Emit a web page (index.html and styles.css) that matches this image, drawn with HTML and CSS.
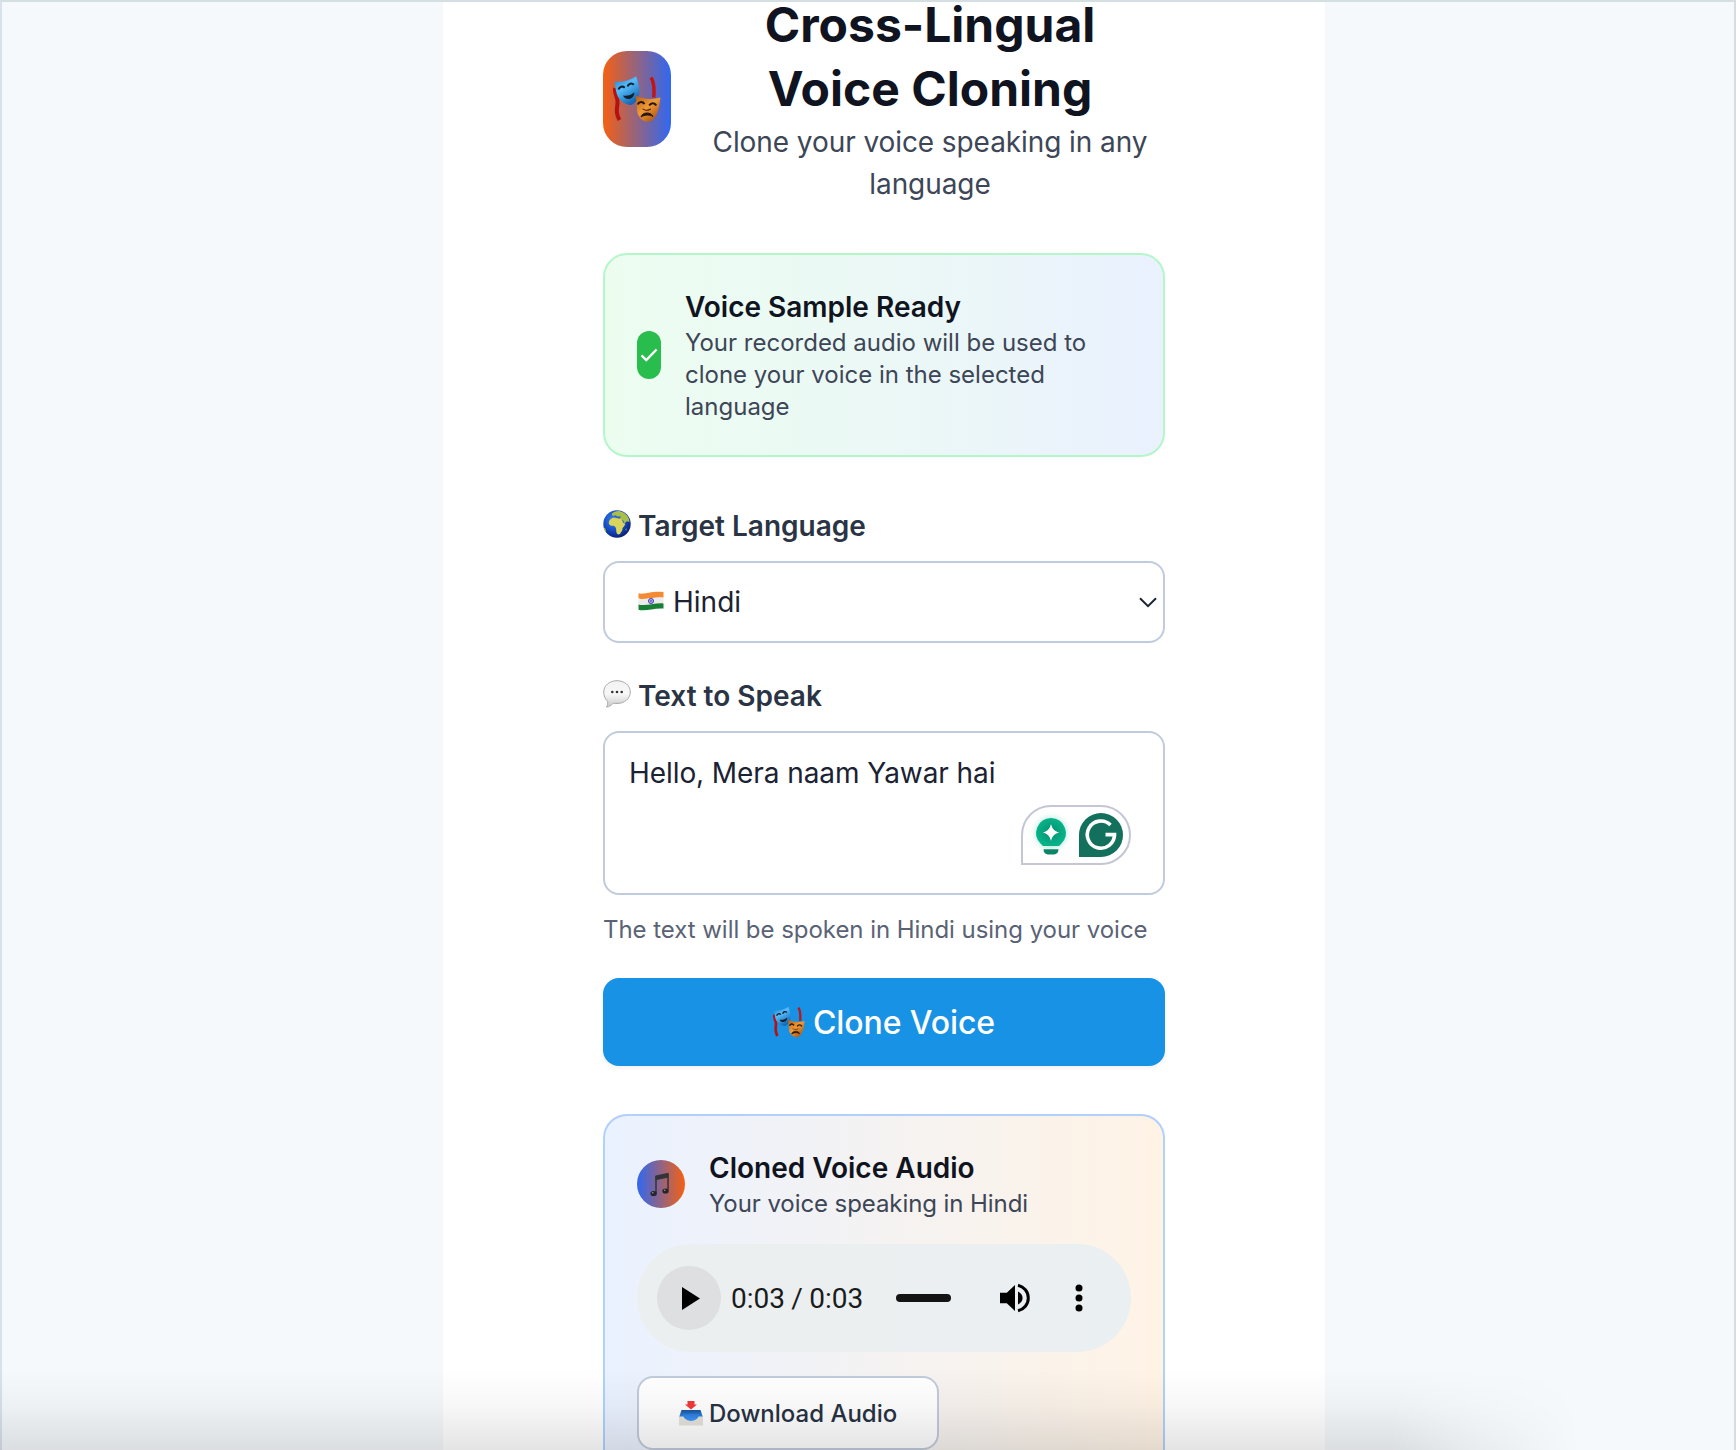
FILE: index.html
```html
<!DOCTYPE html>
<html lang="en">
<head>
<meta charset="utf-8">
<title>Cross-Lingual Voice Cloning</title>
<link rel="stylesheet" href="styles.css">
</head>
<body>
<svg class="defs" aria-hidden="true">
  <defs>
    <linearGradient id="maskBlue" x1="0" y1="0" x2=".6" y2="1"><stop offset="0" stop-color="#1f78c4"/><stop offset=".45" stop-color="#55bdfb"/><stop offset="1" stop-color="#1467b4"/></linearGradient>
    <linearGradient id="maskGold" x1="0" y1="0" x2=".8" y2="1"><stop offset="0" stop-color="#b85c0c"/><stop offset=".5" stop-color="#f09a38"/><stop offset="1" stop-color="#a9500b"/></linearGradient>
    <radialGradient id="sea" cx=".4" cy=".35" r=".65"><stop offset="0" stop-color="#3f86ee"/><stop offset=".6" stop-color="#164cc4"/><stop offset="1" stop-color="#0b237c"/></radialGradient>
    <linearGradient id="bubble" x1="0" y1="0" x2="0" y2="1"><stop offset="0" stop-color="#f2f2f2"/><stop offset=".5" stop-color="#f8f8f8"/><stop offset="1" stop-color="#c8c8c8"/></linearGradient>
    <linearGradient id="tray" x1="0" y1="0" x2="0" y2="1"><stop offset="0" stop-color="#17559f"/><stop offset="1" stop-color="#3b93f5"/></linearGradient>
    <linearGradient id="paper" x1="0" y1="0" x2="0" y2="1"><stop offset="0" stop-color="#2f7fe0"/><stop offset="1" stop-color="#3f97fb"/></linearGradient>
    <radialGradient id="bulb"><stop offset="0" stop-color="#0a8f70"/><stop offset="1" stop-color="#06b48a"/></radialGradient>
    <symbol id="masks" viewBox="0 0 48 48">
      <path d="M2 13C1 18 5 22 4.500 28S2.500 38 6.500 45" fill="none" stroke="#b5120f" stroke-width="4"/>
      <path d="M38 2.500c3 4 3.500 10 2.800 20" fill="none" stroke="#c01512" stroke-width="3.500"/>
      <path d="M1.500 6.500C9 7.500 17 5.500 23 1.200c2 5.300 4 11.300 3.200 17.300-.6 5-3.700 10-8.200 11.500C11.500 29.500 6 25.500 4 19.500 2.600 15 2.200 11 1.500 6.500Z" fill="url(#maskBlue)"/>
      <path d="M5.500 14.500c1-3 4-3.800 6.300-1.700M14.500 11.500c1-3 4.200-4 6.300-1.800" fill="none" stroke="#10202e" stroke-width="2.100"/>
      <path d="M10 20.500c4 .7 8.500-.4 11.300-3.300.2 3.500-2 6.500-5.300 6.800-2.800.2-5-1.200-6-3.500Z" fill="#10202e"/>
      <path d="M22.500 20.500c7 3.500 16 4.500 25 2-1 6.500-1.500 12.500-4.500 18-2 4-4.700 6.500-8.200 6.300-4.300-.2-8.300-3.300-10-7.800-1.500-4-.5-11-2.300-18.500Z" fill="url(#maskGold)"/>
      <path d="M24.800 29.500c1-3 4.700-3.500 6.700-.5M36.200 30.500c2-3 5.600-2.800 7 0" fill="none" stroke="#23170d" stroke-width="2.100"/>
      <path d="M29.500 34c2 .3 3 1.800 5 1.200 1.500-.2 2.300-1 3.500-1" fill="none" stroke="#5c2c08" stroke-width="1.200"/>
      <path d="M28 42c1.500-5 9.500-5.500 12-.5-3-2-8-2-12 .5Z" fill="#23170d" stroke="#23170d"/>
    </symbol>
  </defs>
</svg>

<main class="panel">
  <header class="hero">
    <div class="hero-icon"><svg width="48" height="48"><use href="#masks"/></svg></div>
    <div class="hero-text">
      <h1>Cross-Lingual Voice Cloning</h1>
      <p>Clone your voice speaking in any language</p>
    </div>
  </header>

  <section class="sample">
    <div class="sample-check">
      <svg width="18" height="14" viewBox="0 0 18 14"><path d="M1.500 7.300l4.800 4.800L16.600 1.500" fill="none" stroke="#fff" stroke-width="2.400"/></svg>
    </div>
    <div class="copy">
      <h2>Voice Sample Ready</h2>
      <p>Your recorded audio will be used to clone your voice in the selected language</p>
    </div>
  </section>

  <div class="field">
    <div class="label">
      <svg width="28" height="28" viewBox="0 0 28 28"><circle cx="14" cy="14" r="13.700" fill="url(#sea)"/><path d="M9 3.500c2-1.800 5-2.700 8-2.300 4 .8 7.500 3.800 9 7.800l.5 3-2.500-.7-2.500 2-1.500-3-2.500-1.300-1.500-2-3 .3-2.500-1-1.500-1.300Z" fill="#a9bf4c"/><path d="M10 6l2.500-.8 2 1.300 3-.3.5 1.300-3.500.5-2.500-.3Z" fill="#2f66c0"/><path d="M7 9.800C8 8.200 10 7.600 12.500 7.800c2 .8 4 .7 6 1.200l2 4 1.800.8c-.3 2-2 3-2.800 4.500.2 2.500-1.300 3.800-2.500 5.700-1.700 1-3 .4-3.500-1.500-.6-2 .1-3.500-1-5.200-.5-1.300-1.700-1.800-3.300-1.600C7 15.900 6 14.500 5.800 12.800c0-1.200.5-2.200 1.200-3Z" fill="#d8d45c"/><path d="M.6 17.500c1.500 0 2.600 1.500 2.200 4.500C1.500 20.700.9 19.300.6 17.500Z" fill="#a8be48"/><path d="M22.500 19.500l1-1.500-.3 3Z" fill="#c5c653"/></svg>
      <span>Target Language</span>
    </div>
    <div class="select">
      <svg class="flag" width="26" height="20" viewBox="0 0 26 20"><path d="M.5 2.300C6 4 13-.2 25.500 1v5.800C16 5.500 8 9.500.5 7.500Z" fill="#f58a34"/><path d="M.5 7.500C8 9.500 16 5.500 25.500 6.800v5.600C16 11.500 8 15.500.5 13.500Z" fill="#ececec"/><path d="M.5 13.500C8 15.500 16 11.500 25.500 12.400V17.500C16 16.700 8 20.500.5 18.700Z" fill="#178035"/><circle cx="13" cy="10" r="2.500" fill="#b9b9ec" stroke="#3a3aad" stroke-width="1"/><circle cx="13" cy="10" r=".8" fill="#22229a"/></svg>
      <span>Hindi</span>
      <svg class="chevron" width="18" height="11" viewBox="0 0 18 11"><path d="M1 1.200l8 8 8-8" fill="none" stroke="#1c2433" stroke-width="2"/></svg>
    </div>
  </div>

  <div class="field">
    <div class="label">
      <svg width="28" height="28" viewBox="0 0 28 28"><path d="M14 .7c7.500 0 13.300 4.800 13.300 11.300S21.500 23.500 14 23.500c-1.300 0-2.500-.1-3.700-.4-1.500 2-4 3.600-6.800 4 1-1.500 1.500-3.600 1.100-5.800C2.200 19.200.7 15.700.7 12 .7 5.500 6.500.7 14 .7Z" fill="url(#bubble)" stroke="#a9a9a9"/><g fill="#333"><circle cx="9.300" cy="12" r="1.300"/><circle cx="14" cy="12" r="1.300"/><circle cx="18.700" cy="12" r="1.300"/></g></svg>
      <span>Text to Speak</span>
    </div>
    <div class="textarea">
      Hello, Mera naam Yawar hai
      <div class="assistant">
        <svg width="36" height="44" viewBox="0 0 36 44"><circle class="glow" cx="17" cy="20" r="15" fill="#06b48a"/><path d="M17 5a15 15 0 0 1 10.500 25.500l-2.500 2.500H9l-2.500-2.500A15 15 0 0 1 17 5Z" fill="url(#bulb)"/><path d="M17 11c1.300 5 3.200 7 8.200 8.500-5 1.500-6.900 3.500-8.200 8.500-1.300-5-3.200-7-8.200-8.500 5-1.500 6.900-3.500 8.200-8.500Z" fill="#fff"/><path d="M9.500 36.200h15c0 3.300-1.700 5.200-4.500 5.200h-6c-2.800 0-4.500-1.900-4.500-5.200Z" fill="#0b8468"/></svg>
        <svg width="44" height="44" viewBox="0 0 44 44"><path d="M22 0a22 22 0 0 1 0 44H0V22A22 22 0 0 1 22 0Z" fill="#12705c"/><path d="M31.500 12A13.600 13.600 0 1 0 35.500 21.600H26.500M35.500 21.600V23" fill="none" stroke="#fff" stroke-width="3.600"/></svg>
      </div>
    </div>
    <p class="hint">The text will be spoken in Hindi using your voice</p>
  </div>

  <button class="clone" type="button"><svg width="32" height="32"><use href="#masks"/></svg><span>Clone Voice</span></button>

  <section class="result">
    <div class="result-head">
      <div class="result-icon">
        <svg width="20" height="25" viewBox="0 0 20 25"><path d="M5.500 3.500L18.500.8v4.700L5.500 8.200Z" fill="#33333a"/><path d="M6 4v17M18 2v16.500" stroke="#33333a" stroke-width="1.500"/><ellipse cx="3.600" cy="21.500" rx="3.200" ry="2.600" fill="#25252b"/><ellipse cx="15.500" cy="19" rx="3.200" ry="2.600" fill="#25252b"/><circle cx="2.800" cy="20.800" r=".8" fill="#999"/><circle cx="14.700" cy="18.300" r=".8" fill="#999"/></svg>
      </div>
      <div class="copy">
        <h2>Cloned Voice Audio</h2>
        <p>Your voice speaking in Hindi</p>
      </div>
    </div>
    <div class="player">
      <div class="play"><svg width="18" height="23" viewBox="0 0 18 23"><path d="M0 0l18 11.500L0 23Z"/></svg></div>
      <span class="time">0:03 / 0:03</span>
      <div class="track"></div>
      <svg class="volume" width="30" height="30" viewBox="0 0 30 30"><path d="M0 9.800h6.800L15 2v26l-8.200-7.800H0Z"/><path d="M18 8.500c2.800 1.300 4.600 3.700 4.600 6.500s-1.800 5.200-4.600 6.500Z"/><path d="M18 2.200c6 1.500 10.300 6.500 10.300 12.800S24 26.300 18 27.800" fill="none" stroke="#000" stroke-width="3"/></svg>
      <svg class="more" width="8" height="28" viewBox="0 0 8 28"><circle cx="4" cy="4" r="3.500"/><circle cx="4" cy="14" r="3.500"/><circle cx="4" cy="24" r="3.500"/></svg>
    </div>
    <button class="download" type="button">
      <svg width="24" height="25" viewBox="0 0 24 25"><path d="M2.500 9h19L24 16.500v1H0v-1Z" fill="url(#tray)"/><path d="M0 15.500h5c1 3 3.500 4.500 7 4.500s6-1.500 7-4.500h5V24.500H0Z" fill="#e6e3dc"/><path d="M4 13h16c0 4-3.500 7-8 7s-8-3-8-7Z" fill="url(#paper)"/><path d="M8.500 0h7v3.500H18L12 8.500 6 3.500h2.500Z" fill="#f23a38"/></svg>
      <span>Download Audio</span>
    </button>
  </section>
</main>
<div class="shade"></div>
</body>
</html>
```
FILE: styles.css
```css
* { box-sizing: border-box; margin: 0; }

body {
  height: 1450px;
  overflow: hidden;
  background: #f6f9fc;
  border: 2px solid #d9e1ec;
  border-top-color: #d3dfe0;
  border-right-color: #d8dcde;
  border-bottom: 0;
  font-family: Inter, "Liberation Sans", sans-serif;
  font-optical-sizing: none;
  color: #0f1420;
}

.defs { position: absolute; width: 0; height: 0; }
svg { display: block; flex: none; }

.panel {
  width: 882px;
  height: 1448px;
  margin-left: 441px;
  padding: 0 160px;
  background: #fff;
}

.hero { display: flex; align-items: center; gap: 24px; height: 203px; }
.hero-icon {
  flex: none;
  display: grid;
  place-items: center;
  width: 68px;
  height: 96px;
  margin-top: -9px;
  border-radius: 24px;
  background: linear-gradient(90deg, #f56012, #2f68f2);
}
.hero-text { flex: 1; margin-top: -9px; text-align: center; }
h1 { font-size: 48px; line-height: 64px; font-weight: 700; }
.hero-text p { font-size: 28px; line-height: 42px; letter-spacing: -.08px; color: #3d4656; }

.copy h2 { font-size: 28px; line-height: 40px; font-weight: 600; }
.copy p { font-size: 24px; line-height: 32px; color: #3d4656; }

.sample {
  display: flex;
  align-items: center;
  gap: 24px;
  margin-top: 48px;
  padding: 32px;
  border: 2px solid #b3f7c9;
  border-radius: 24px;
  background: linear-gradient(90deg, #ecfdf0, #ebf7f7 60%, #eaf1ff);
}
.sample-check {
  flex: none;
  display: grid;
  place-items: center;
  width: 24px;
  height: 48px;
  border-radius: 12px;
  background: #28bd4d;
}

.field { margin-top: 32px; }
.sample + .field { margin-top: 48px; }
.label {
  display: flex;
  align-items: center;
  gap: 7px;
  height: 40px;
  padding-top: 1px;
  margin-bottom: 16px;
  font-size: 28px;
  font-weight: 600;
  color: #2a3444;
}
.label svg { margin-top: -3px; }

.select {
  display: flex;
  align-items: center;
  height: 82px;
  padding: 0 6px 0 33px;
  border: 2px solid #c0cbdb;
  border-radius: 16px;
  font-size: 28px;
  color: #1a2233;
}
.flag { margin: -3px 9px 0 0; }
.chevron { margin-left: auto; }

.textarea {
  position: relative;
  height: 164px;
  padding: 20px 24px;
  border: 2px solid #c0cbdb;
  border-radius: 16px;
  font-size: 28px;
  line-height: 40px;
  letter-spacing: -.08px;
  color: #1a2233;
}
.assistant {
  position: absolute;
  right: 32px;
  bottom: 28px;
  display: flex;
  gap: 9px;
  width: 110px;
  height: 60px;
  padding: 6px 0 0 11px;
  border: 2px solid #c4c6d6;
  border-radius: 30px 30px 30px 0;
  background: #fff;
}
.assistant svg { overflow: visible; }
.glow { opacity: .35; filter: blur(3px); }

.hint { margin-top: 19px; font-size: 24px; line-height: 32px; letter-spacing: -.045px; color: #5a6375; }

button { font-family: inherit; }
.clone {
  display: flex;
  align-items: center;
  justify-content: center;
  gap: 8px;
  width: 100%;
  height: 88px;
  margin-top: 32px;
  border: 0;
  border-radius: 16px;
  background: #1892e4;
  box-shadow: 0 2px 4px rgba(0, 0, 0, .06);
  color: #fff;
  font-size: 32px;
  font-weight: 500;
  letter-spacing: -.08px;
}

.result {
  height: 336px;
  margin-top: 48px;
  padding: 32px 32px 0;
  border: 2px solid #b1d0fb;
  border-bottom: 0;
  border-radius: 24px 24px 0 0;
  background: linear-gradient(90deg, #eaf2ff, #fff3e5);
}
.result-head { display: flex; align-items: center; gap: 24px; }
.result-head p { letter-spacing: -.08px; }
.result-icon {
  display: grid;
  place-items: center;
  width: 48px;
  height: 48px;
  border-radius: 50%;
  background: linear-gradient(90deg, #2f68f2, #f56012);
}
.result-icon svg { margin-left: -2px; }

.player {
  display: flex;
  align-items: center;
  height: 108px;
  margin-top: 24px;
  padding: 0 48px 0 20px;
  border-radius: 54px;
  background: linear-gradient(90deg, #ecefef, #eaeff2);
}
.play {
  display: grid;
  place-items: center;
  width: 64px;
  height: 64px;
  padding-left: 4px;
  border-radius: 50%;
  background: #dddfe0;
}
.time { width: 133px; margin-left: 10px; font: 28px Roboto, sans-serif; word-spacing: -.6px; color: #1a1c1c; white-space: nowrap; }
.track { width: 55px; height: 8px; margin-left: 32px; border-radius: 4px; background: #141414; }
.volume { margin-left: auto; }
.more { margin-left: 45px; }

.download {
  display: flex;
  align-items: center;
  gap: 6px;
  width: 302px;
  height: 74px;
  margin-top: 24px;
  padding: 0 40px;
  border: 2px solid #c0cbdb;
  border-radius: 16px;
  background: #fff;
  color: #273244;
  font-size: 24px;
  font-weight: 500;
  white-space: nowrap;
}

/* soft shadow rising from the bottom edge, fading out on the right */
.shade {
  position: absolute;
  left: 0;
  top: 1370px;
  width: 1580px;
  height: 80px;
  background: linear-gradient(rgba(0, 0, 0, 0), rgba(0, 0, 0, .03) 45%, rgba(0, 0, 0, .105));
  mask-image: linear-gradient(90deg, #000 1390px, rgba(0, 0, 0, .5) 1470px, transparent);
}
```
